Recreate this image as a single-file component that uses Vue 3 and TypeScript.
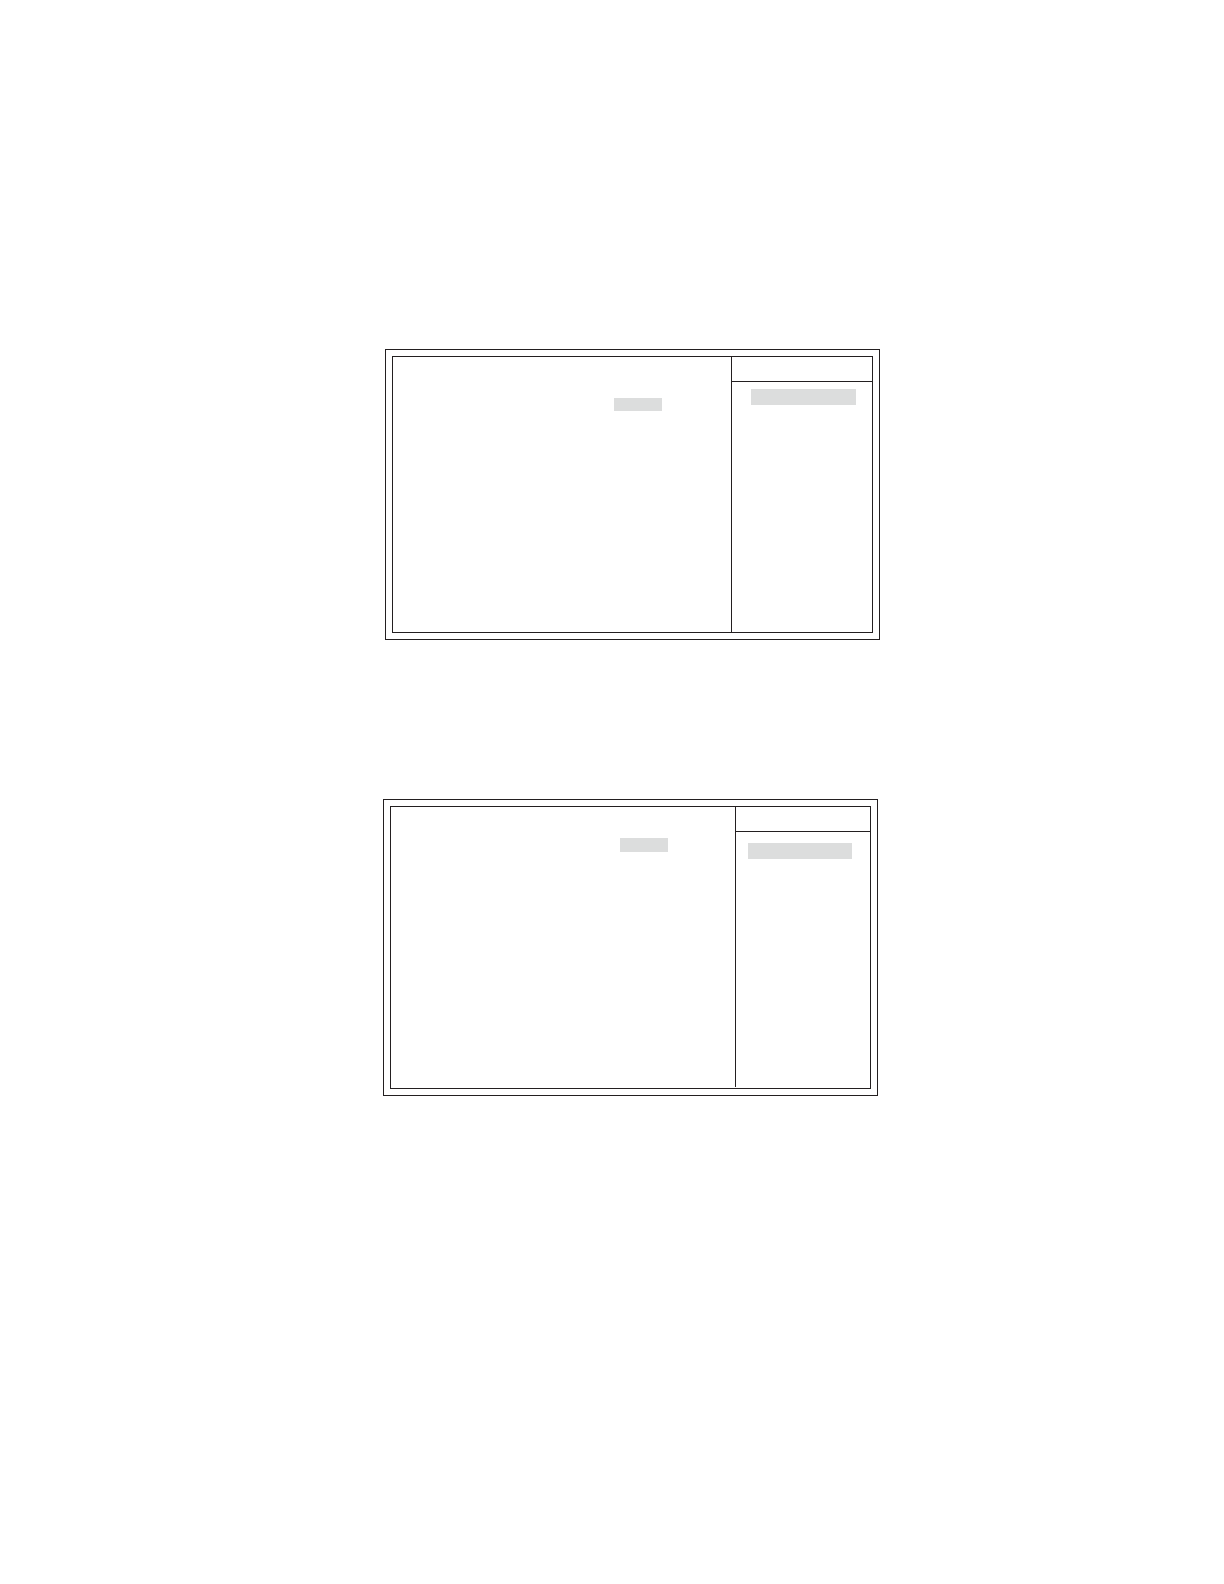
<script setup lang="ts">
interface Screen {
  id: string
  label: string
}

const screens: Screen[] = [
  { id: 'first', label: 'Setup screen one' },
  { id: 'second', label: 'Setup screen two' },
]
</script>

<template>
  <main class="page">
    <div v-for="screen in screens" :key="screen.id" class="row" :class="screen.id">
      <section class="frame" :aria-label="screen.label">
        <div class="panel">
          <div class="options">
            <div class="value"></div>
          </div>
          <aside class="help">
            <header class="help-title"></header>
            <div class="help-highlight"></div>
          </aside>
        </div>
      </section>
    </div>
  </main>
</template>

<style>
body {
  margin: 0;
  background: #fff;
}
</style>

<style scoped>
.page {
  --line: #231f20;
  --highlight: #dcdddd;
  display: flex;
  flex-direction: column;
  gap: 159px;
  padding: 349px 0;
}

.row {
  display: grid;
}

.row.first {
  grid-template-columns: 385fr 495fr 344fr;
}

.row.second {
  grid-template-columns: 383fr 495fr 346fr;
}

.frame {
  grid-column: 2;
  padding: 6px;
  border: 1px solid var(--line);
}

.panel {
  display: grid;
  border: 1px solid var(--line);
}

.first .panel {
  grid-template-columns: 338fr 141fr;
  min-height: 275px;
}

.second .panel {
  grid-template-columns: 344fr 135fr;
  min-height: 281px;
}

.value {
  width: 48px;
  background: var(--highlight);
}

.first .value {
  height: 13px;
  margin: 41px 0 0 221px;
}

.second .value {
  height: 14px;
  margin: 31px 0 0 229px;
}

.help {
  border-left: 1px solid var(--line);
}

.second .help {
  margin-bottom: 1px;
}

.help-title {
  height: 24px;
  border-bottom: 1px solid var(--line);
}

.help-highlight {
  height: 16px;
  background: var(--highlight);
}

.first .help-highlight {
  margin: 7px 16px 0 19px;
}

.second .help-highlight {
  margin: 11px 18px 0 12px;
}
</style>
